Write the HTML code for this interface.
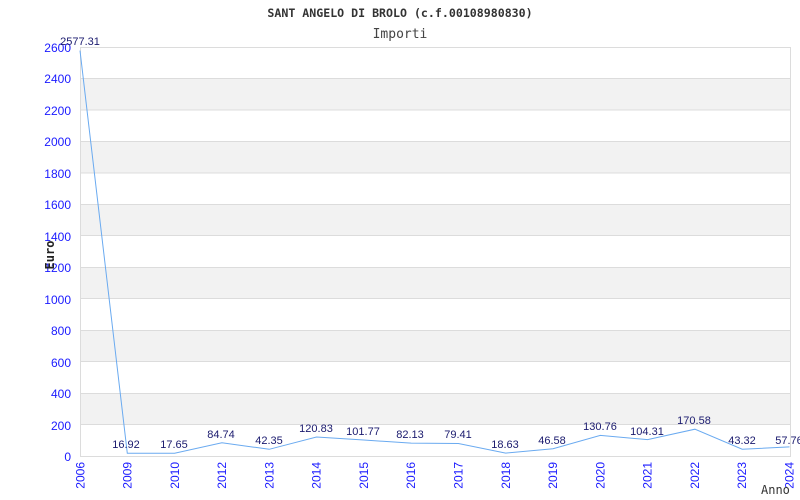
<!DOCTYPE html>
<html><head><meta charset="utf-8"><style>
html,body{margin:0;padding:0;background:#fff;width:800px;height:500px;overflow:hidden}
svg{display:block}
.ax{font-family:"Liberation Sans",sans-serif;font-size:12px;fill:#1a1aff}
.dl{font-family:"Liberation Sans",sans-serif;font-size:11px;fill:#1a1a6e}
.mono{font-family:"DejaVu Sans Mono","Liberation Mono",monospace}
</style></head><body>
<svg width="800" height="500" viewBox="0 0 800 500">
<text x="400" y="17" text-anchor="middle" class="mono" font-size="11.6" font-weight="bold" fill="#333">SANT ANGELO DI BROLO (c.f.00108980830)</text>
<text x="400" y="38" text-anchor="middle" class="mono" font-size="13" fill="#444">Importi</text>
<g fill="#f2f2f2">
<rect x="80" y="78.5" width="710" height="31.4"/>
<rect x="80" y="141.4" width="710" height="31.4"/>
<rect x="80" y="204.3" width="710" height="31.5"/>
<rect x="80" y="267.2" width="710" height="31.5"/>
<rect x="80" y="330.2" width="710" height="31.4"/>
<rect x="80" y="393.1" width="710" height="31.4"/>
</g>
<g stroke="#dcdcdc" stroke-width="1">
<line x1="80" x2="790" y1="47.5" y2="47.5"/><line x1="80" x2="790" y1="78.5" y2="78.5"/>
<line x1="80" x2="790" y1="110" y2="110"/><line x1="80" x2="790" y1="141.5" y2="141.5"/>
<line x1="80" x2="790" y1="173" y2="173"/><line x1="80" x2="790" y1="204.5" y2="204.5"/>
<line x1="80" x2="790" y1="235.5" y2="235.5"/><line x1="80" x2="790" y1="267.5" y2="267.5"/>
<line x1="80" x2="790" y1="298.5" y2="298.5"/><line x1="80" x2="790" y1="330.5" y2="330.5"/>
<line x1="80" x2="790" y1="361.5" y2="361.5"/><line x1="80" x2="790" y1="393.5" y2="393.5"/>
<line x1="80" x2="790" y1="424.5" y2="424.5"/><line x1="80" x2="790" y1="456.5" y2="456.5"/>
<line x1="80.5" x2="80.5" y1="47" y2="457"/><line x1="790.5" x2="790.5" y1="47" y2="457"/>
</g>
<g class="ax" text-anchor="end">
<text x="71" y="52">2600</text><text x="71" y="83">2400</text><text x="71" y="115">2200</text>
<text x="71" y="146">2000</text><text x="71" y="178">1800</text><text x="71" y="209">1600</text>
<text x="71" y="241">1400</text><text x="71" y="272">1200</text><text x="71" y="304">1000</text>
<text x="71" y="335">800</text><text x="71" y="367">600</text><text x="71" y="398">400</text>
<text x="71" y="430">200</text><text x="71" y="461">0</text>
</g>
<text transform="translate(54,255) rotate(-90)" text-anchor="middle" class="mono" font-size="12" font-weight="bold" fill="#222">Euro</text>
<polyline fill="none" stroke="#6aaaf0" stroke-width="1" points="80,50.6 127.3,453.3 174.6,453.2 221.9,442.7 269.2,449.3 316.5,437 363.8,440 411.1,443.1 458.4,443.5 505.7,453.1 553,448.7 600.3,435.4 647.6,439.6 694.9,429.2 742.2,449.2 789.5,446.9"/>
<g class="dl" text-anchor="middle">
<text x="80" y="45">2577.31</text>
<text x="126" y="448">16.92</text><text x="174" y="448">17.65</text>
<text x="221" y="438">84.74</text><text x="269" y="444">42.35</text>
<text x="316" y="432">120.83</text><text x="363" y="435">101.77</text>
<text x="410" y="438">82.13</text><text x="458" y="438">79.41</text>
<text x="505" y="448">18.63</text><text x="552" y="444">46.58</text>
<text x="600" y="430">130.76</text><text x="647" y="435">104.31</text>
<text x="694" y="424">170.58</text><text x="742" y="444">43.32</text>
<text x="789" y="444">57.76</text>
</g>
<g class="ax" text-anchor="end">
<text transform="translate(84.5,462) rotate(-90)">2006</text>
<text transform="translate(131.5,462) rotate(-90)">2009</text>
<text transform="translate(179,462) rotate(-90)">2010</text>
<text transform="translate(226,462) rotate(-90)">2012</text>
<text transform="translate(273.5,462) rotate(-90)">2013</text>
<text transform="translate(320.5,462) rotate(-90)">2014</text>
<text transform="translate(368,462) rotate(-90)">2015</text>
<text transform="translate(415,462) rotate(-90)">2016</text>
<text transform="translate(462.5,462) rotate(-90)">2017</text>
<text transform="translate(510,462) rotate(-90)">2018</text>
<text transform="translate(557,462) rotate(-90)">2019</text>
<text transform="translate(604.5,462) rotate(-90)">2020</text>
<text transform="translate(651.5,462) rotate(-90)">2021</text>
<text transform="translate(699,462) rotate(-90)">2022</text>
<text transform="translate(746,462) rotate(-90)">2023</text>
<text transform="translate(793.5,462) rotate(-90)">2024</text>
</g>
<text x="761" y="494" class="mono" font-size="12" fill="#333">Anno</text>
</svg>
</body></html>
